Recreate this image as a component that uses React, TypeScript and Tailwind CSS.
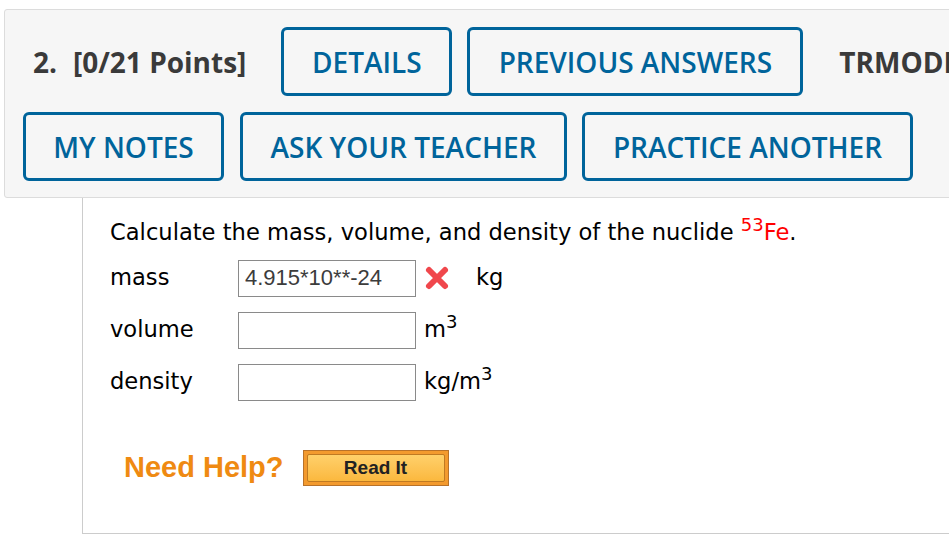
import React from 'react';

const btn =
  'flex h-[69px] shrink-0 items-center justify-center rounded-[6px] border-[3px] border-[#00649b] text-[28px] font-semibold text-[#00649b] whitespace-nowrap';

function Row({ label, value, error, unit }: { label: string; value?: string; error?: boolean; unit: React.ReactNode }) {
  return (
    <div className="flex h-[52px] items-center">
      <div className="w-[128px]">{label}</div>
      <input
        readOnly
        value={value ?? ''}
        className="h-[37px] w-[178px] border border-[#8a8a8a] bg-white px-[6px] font-['Liberation_Sans',sans-serif] text-[22px] text-[#3c3c3c] outline-none"
      />
      {error && (
        <svg width="26" height="26" viewBox="0 0 26 26" className="ml-[8px]">
          <path d="M5 5 L21 21 M21 5 L5 21" stroke="#f0474c" strokeWidth="6" strokeLinecap="round" />
        </svg>
      )}
      <div className={error ? 'ml-[26px]' : 'ml-[8px]'}>{unit}</div>
    </div>
  );
}

export default function App() {
  return (
    <div className="h-[551px] w-[949px] overflow-hidden bg-white">
      <div className="w-[1300px] pl-[4px] pt-[9px]">
        <div className="rounded-[3px] border border-[#dcdcdc] bg-[#f6f6f6] pb-[16px] pt-[17px] font-['Open_Sans',sans-serif]">
          <div className="flex items-center whitespace-nowrap">
            <span className="ml-[28px] shrink-0 text-[28px] font-bold text-[#3a3a3a]">2.</span>
            <span className="ml-[16px] shrink-0 text-[28px] font-bold text-[#3a3a3a]">[0/21 Points]</span>
            <div className={`${btn} ml-[35px] w-[171px]`}>DETAILS</div>
            <div className={`${btn} ml-[15px] w-[336px]`}>PREVIOUS ANSWERS</div>
            <span className="ml-[36px] shrink-0 text-[28px] font-bold text-[#3a3a3a]">TRMODEL1 10.1.006.</span>
          </div>
          <div className="mt-[16px] flex items-center">
            <div className={`${btn} ml-[18px] w-[201px]`}>MY NOTES</div>
            <div className={`${btn} ml-[16px] w-[327px]`}>ASK YOUR TEACHER</div>
            <div className={`${btn} ml-[15px] w-[331px]`}>PRACTICE ANOTHER</div>
          </div>
        </div>
        <div className="ml-[78px] h-[336px] border-b border-l border-[#cccccc] pl-[27px] pt-[16px] font-['DejaVu_Sans',sans-serif] text-[22.6px] text-black">
          <p className="leading-[36px]">
            Calculate the mass, volume, and density of the nuclide{' '}
            <span className="text-[#ff0000]">
              <sup className="text-[18px]">53</sup>Fe
            </span>
            .
          </p>
          <div className="mt-[2px]">
            <Row label="mass" value="4.915*10**-24" error unit="kg" />
            <Row label="volume" unit={<span>m<sup className="text-[18px]">3</sup></span>} />
            <Row label="density" unit={<span>kg/m<sup className="text-[18px]">3</sup></span>} />
          </div>
          <div className="mt-[38px] flex items-center pl-[14px]">
            <span className="font-['Liberation_Sans',sans-serif] text-[29px] font-bold text-[#ef8a12]">Need Help?</span>
            <div className="ml-[19px] flex h-[36px] w-[146px] items-center justify-center border border-[#b8722a] bg-[#f39a2e] p-[3px]">
              <div className="flex h-full w-full items-center justify-center rounded-[2px] border border-[#c07a22] bg-gradient-to-b from-[#ffd06a] to-[#fbb83d] font-['Liberation_Sans',sans-serif] text-[19px] font-bold text-[#222]">
                Read It
              </div>
            </div>
          </div>
        </div>
      </div>
    </div>
  );
}
